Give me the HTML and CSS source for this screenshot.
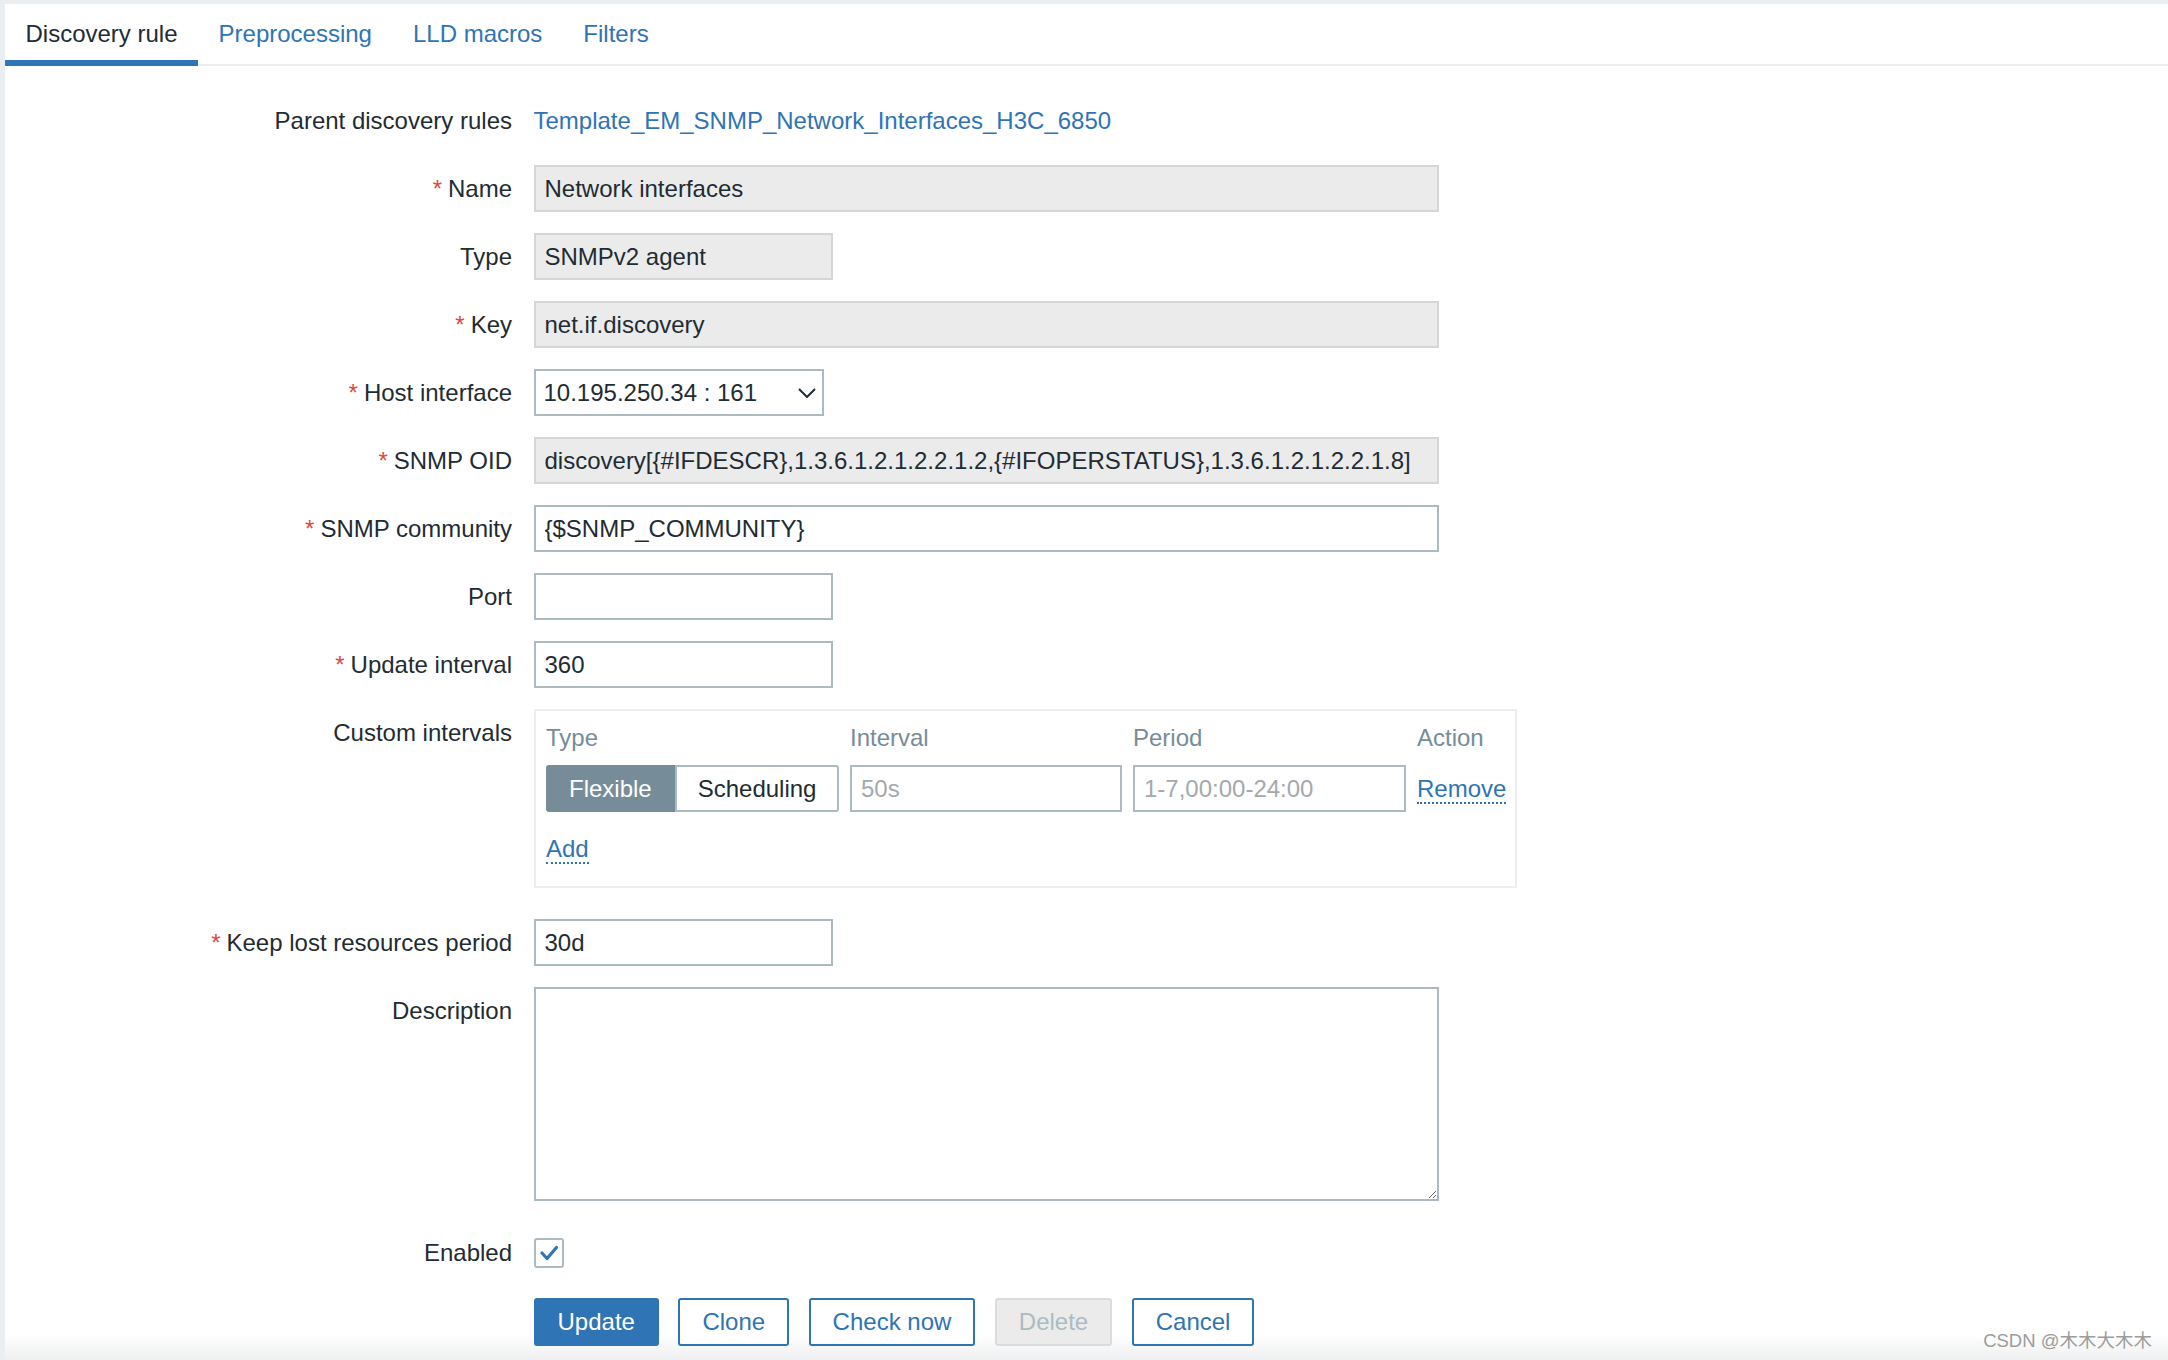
FILE: index.html
```html
<!DOCTYPE html>
<html>
<head>
<meta charset="utf-8">
<title>Discovery rule</title>
<link rel="stylesheet" href="styles.css">
</head>
<body>
<div class="page">
  <nav class="tabs">
    <span class="tab tab-active">Discovery rule</span>
    <a class="tab">Preprocessing</a>
    <a class="tab">LLD macros</a>
    <a class="tab">Filters</a>
  </nav>

  <div class="form">
    <div class="row">
      <div class="lbl">Parent discovery rules</div>
      <div class="val"><a class="link">Template_EM_SNMP_Network_Interfaces_H3C_6850</a></div>
    </div>
    <div class="row">
      <div class="lbl"><span class="req">*</span>Name</div>
      <div class="val"><input class="inp inp-ro w-wide" readonly value="Network interfaces"></div>
    </div>
    <div class="row">
      <div class="lbl">Type</div>
      <div class="val"><input class="inp inp-ro w-small" readonly value="SNMPv2 agent"></div>
    </div>
    <div class="row">
      <div class="lbl"><span class="req">*</span>Key</div>
      <div class="val"><input class="inp inp-ro w-wide" readonly value="net.if.discovery"></div>
    </div>
    <div class="row">
      <div class="lbl"><span class="req">*</span>Host interface</div>
      <div class="val">
        <div class="select">
          <span class="select-text">10.195.250.34 : 161</span>
          <svg class="chevron" width="18" height="10" viewBox="0 0 18 10"><path d="M1 1 L9 9 L17 1" fill="none" stroke="#1f2c33" stroke-width="2"/></svg>
        </div>
      </div>
    </div>
    <div class="row">
      <div class="lbl"><span class="req">*</span>SNMP OID</div>
      <div class="val"><input class="inp inp-ro w-wide" readonly value="discovery[{#IFDESCR},1.3.6.1.2.1.2.2.1.2,{#IFOPERSTATUS},1.3.6.1.2.1.2.2.1.8]"></div>
    </div>
    <div class="row">
      <div class="lbl"><span class="req">*</span>SNMP community</div>
      <div class="val"><input class="inp w-wide" value="{$SNMP_COMMUNITY}"></div>
    </div>
    <div class="row">
      <div class="lbl">Port</div>
      <div class="val"><input class="inp w-small" value=""></div>
    </div>
    <div class="row">
      <div class="lbl"><span class="req">*</span>Update interval</div>
      <div class="val"><input class="inp w-small" value="360"></div>
    </div>
    <div class="row row-custom">
      <div class="lbl">Custom intervals</div>
      <div class="val">
        <div class="ci">
          <div class="ci-grid">
            <div class="ci-head">Type</div>
            <div class="ci-head">Interval</div>
            <div class="ci-head">Period</div>
            <div class="ci-head">Action</div>
            <div class="seg">
              <span class="seg-item seg-on">Flexible</span>
              <span class="seg-item seg-off">Scheduling</span>
            </div>
            <input class="inp w-interval" placeholder="50s">
            <input class="inp w-period" placeholder="1-7,00:00-24:00">
            <div class="ci-action"><a class="dlink">Remove</a></div>
          </div>
          <div class="ci-add"><a class="dlink">Add</a></div>
        </div>
      </div>
    </div>
    <div class="row">
      <div class="lbl"><span class="req">*</span>Keep lost resources period</div>
      <div class="val"><input class="inp w-small" value="30d"></div>
    </div>
    <div class="row row-desc">
      <div class="lbl">Description</div>
      <div class="val"><textarea class="textarea"></textarea></div>
    </div>
    <div class="row">
      <div class="lbl">Enabled</div>
      <div class="val">
        <div class="chk">
          <svg width="26" height="26" viewBox="0 0 26 26"><path d="M6 13 L11 18.5 L20.5 7.5" fill="none" stroke="#2f74b4" stroke-width="3.2" stroke-linecap="round" stroke-linejoin="round"/></svg>
        </div>
      </div>
    </div>
    <div class="buttons">
      <button class="btn btn-primary">Update</button>
      <button class="btn">Clone</button>
      <button class="btn">Check now</button>
      <button class="btn btn-disabled">Delete</button>
      <button class="btn">Cancel</button>
    </div>
  </div>

  <div class="watermark">CSDN @木木大木木</div>
</div>
</body>
</html>
```

FILE: styles.css
```css
* { box-sizing: border-box; }

html, body {
  margin: 0;
  height: 100%;
}

body {
  background: #ebeef0;
  font-family: "Liberation Sans", Arial, sans-serif;
  font-size: 24px;
  color: #1f2c33;
  overflow: hidden;
}

.page {
  position: relative;
  margin: 4px 0 0 5px;
  height: 1356px;
  background: linear-gradient(to bottom, #ffffff 0, #ffffff calc(100% - 26px), #eeeff0 100%);
}

/* Tabs */
.tabs {
  display: flex;
  height: 62px;
  box-shadow: inset 0 -2px 0 #ebeef0;
}

.tab {
  display: block;
  height: 62px;
  padding: 6px 20.5px 0;
  line-height: 48px;
  color: #2f74b4;
  text-decoration: none;
  white-space: nowrap;
}

.tab-active {
  color: #1f2c33;
  border-bottom: 6px solid #2f74b4;
}

/* Form */
.form {
  display: flex;
  flex-direction: column;
  row-gap: 21px;
  padding-top: 31px;
}

.row {
  display: flex;
  column-gap: 21.5px;
}

.row-custom { margin-bottom: 10px; }
.row-desc { margin-bottom: 7px; }

.lbl {
  flex: none;
  width: 507px;
  text-align: right;
  line-height: 47px;
  white-space: nowrap;
}

.req {
  color: #e0483e;
  margin-right: 6px;
}

.val {
  flex: none;
  display: flex;
  line-height: 47px;
}

.link {
  color: #2f74b4;
  text-decoration: none;
}

.inp {
  height: 47px;
  border: 2px solid #acbbc2;
  padding: 0 9px;
  font: inherit;
  color: inherit;
  background: #ffffff;
  outline: none;
  border-radius: 0;
}

.inp::placeholder {
  color: #a3a9ad;
}

.inp-ro {
  background: #ebebeb;
  border-color: #d3d7da;
}

.w-wide { width: 905px; }
.w-small { width: 299px; }
.w-interval { width: 272px; }
.w-period { width: 273px; }

/* Select */
.select {
  width: 290px;
  height: 47px;
  border: 2px solid #acbbc2;
  padding: 0 6px 0 8px;
  display: flex;
  align-items: center;
  justify-content: space-between;
  line-height: 43px;
}

.chevron {
  display: block;
  margin-top: 1px;
}

/* Custom intervals */
.ci {
  width: 983px;
  height: 179px;
  border: 2px solid #ebeef0;
  padding: 3px 10px 0 10.5px;
}

.ci-grid {
  display: grid;
  grid-template-columns: 293px 272px 273px auto;
  column-gap: 11px;
  row-gap: 4px;
}

.ci-head {
  line-height: 47px;
  color: #768d99;
}

.seg {
  display: flex;
  height: 47px;
}

.seg-item {
  display: block;
  padding: 0 21px;
  border: 2px solid #acbbc2;
  line-height: 43px;
  white-space: nowrap;
}

.seg-on {
  background: #768d99;
  border-color: #768d99;
  color: #ffffff;
  border-radius: 3px 0 0 3px;
}

.seg-off {
  background: #ffffff;
  border-radius: 0 3px 3px 0;
}

.ci-action {
  line-height: 47px;
}

.ci-add {
  margin-top: 13px;
  line-height: 47px;
}

.dlink {
  color: #2f74b4;
  text-decoration: none;
  border-bottom: 2px dotted #2f74b4;
}

/* Description */
.textarea {
  display: block;
  width: 905px;
  height: 214px;
  border: 2px solid #acbbc2;
  font: inherit;
  resize: vertical;
  outline: none;
  border-radius: 0;
  background: #ffffff;
}

/* Checkbox */
.chk {
  width: 30px;
  height: 30px;
  margin-top: 8.5px;
  border: 2px solid #acbbc2;
  border-radius: 3px;
  background: #ffffff;
}

.chk svg { display: block; }

/* Buttons */
.buttons {
  display: flex;
  column-gap: 19.5px;
  padding-left: 528.5px;
  margin-top: 1px;
}

.btn {
  height: 48px;
  padding: 0 22px;
  border: 2px solid #2f74b4;
  border-radius: 3px;
  background: #ffffff;
  color: #2f74b4;
  font: inherit;
  line-height: 44px;
  white-space: nowrap;
}

.btn-primary {
  background: #2f74b4;
  color: #ffffff;
}

.btn-disabled {
  background: #ebebeb;
  border-color: #d9dcde;
  color: #acbbc2;
}

/* Watermark overlay */
.watermark {
  position: absolute;
  right: 16px;
  bottom: 9px;
  font-family: "Liberation Sans", "Noto Sans CJK SC", sans-serif;
  font-size: 18.5px;
  line-height: 20px;
  color: #9c9c9c;
  white-space: nowrap;
}
```
